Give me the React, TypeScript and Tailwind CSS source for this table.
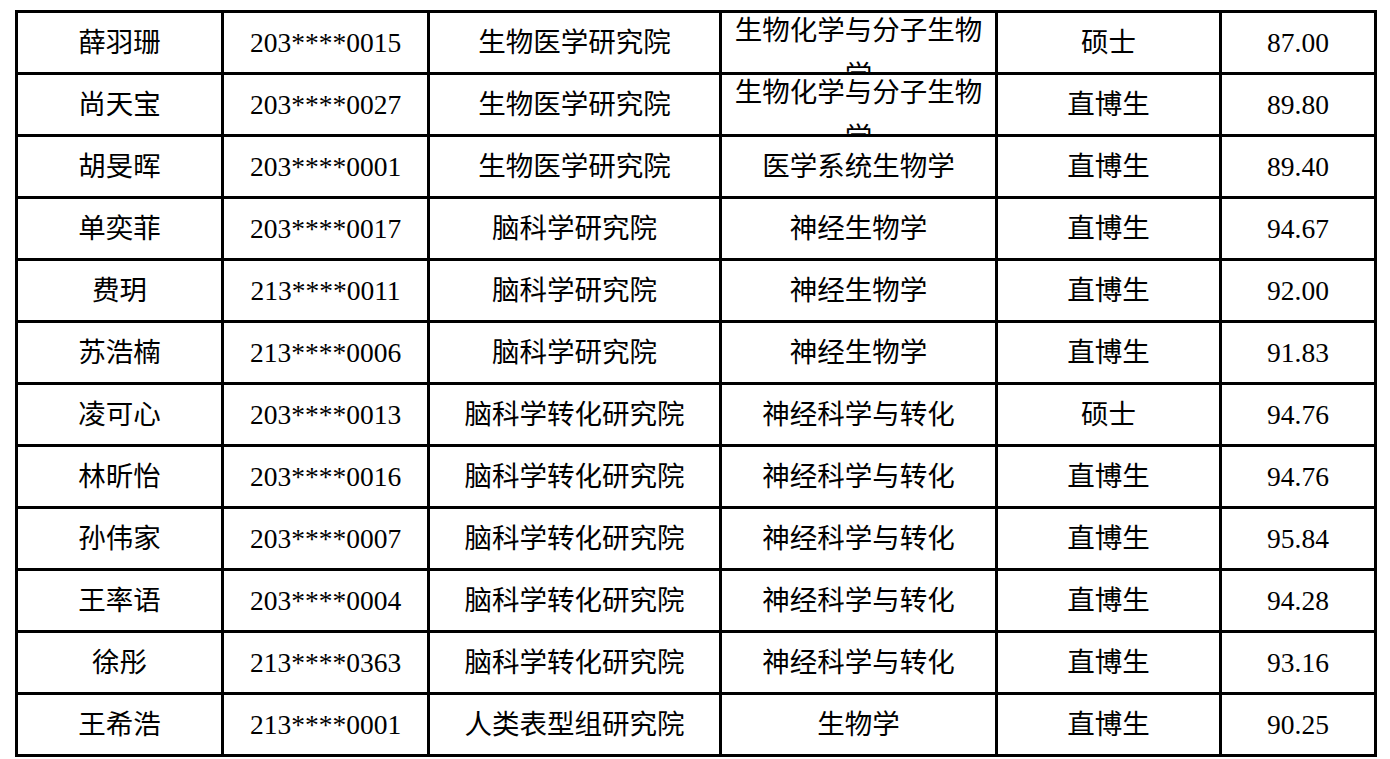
const rows: string[][] = [
  ['薛羽珊', '203****0015', '生物医学研究院', '生物化学与分子生物学', '硕士', '87.00'],
  ['尚天宝', '203****0027', '生物医学研究院', '生物化学与分子生物学', '直博生', '89.80'],
  ['胡旻晖', '203****0001', '生物医学研究院', '医学系统生物学', '直博生', '89.40'],
  ['单奕菲', '203****0017', '脑科学研究院', '神经生物学', '直博生', '94.67'],
  ['费玥', '213****0011', '脑科学研究院', '神经生物学', '直博生', '92.00'],
  ['苏浩楠', '213****0006', '脑科学研究院', '神经生物学', '直博生', '91.83'],
  ['凌可心', '203****0013', '脑科学转化研究院', '神经科学与转化', '硕士', '94.76'],
  ['林昕怡', '203****0016', '脑科学转化研究院', '神经科学与转化', '直博生', '94.76'],
  ['孙伟家', '203****0007', '脑科学转化研究院', '神经科学与转化', '直博生', '95.84'],
  ['王率语', '203****0004', '脑科学转化研究院', '神经科学与转化', '直博生', '94.28'],
  ['徐彤', '213****0363', '脑科学转化研究院', '神经科学与转化', '直博生', '93.16'],
  ['王希浩', '213****0001', '人类表型组研究院', '生物学', '直博生', '90.25'],
]

function Cell({ text, wrap }: { text: string; wrap: boolean }) {
  // long major names wrap and get clipped by the row, as in the source pdf
  if (wrap) {
    return (
      <div className="bg-white overflow-hidden px-3">
        <p className="text-center leading-[45px] -mt-[5px]">{text}</p>
      </div>
    )
  }
  return (
    <div className="bg-white flex items-center justify-center whitespace-nowrap">
      {text}
    </div>
  )
}

export default function App() {
  return (
    <div
      className="min-h-screen bg-white pt-[10px] pl-[15px] text-black text-[27.5px]"
      style={{ fontFamily: '"Liberation Serif", "Noto Sans CJK SC", serif' }}
    >
      <div className="w-[1362px] bg-black p-[3px] grid grid-cols-[203px_203px_289px_273px_221px_152px] auto-rows-[59px] gap-[3px]">
        {rows.map((r, i) =>
          r.map((c, j) => (
            <Cell key={`${i}-${j}`} text={c} wrap={j === 3 && c.length > 9} />
          ))
        )}
      </div>
    </div>
  )
}
